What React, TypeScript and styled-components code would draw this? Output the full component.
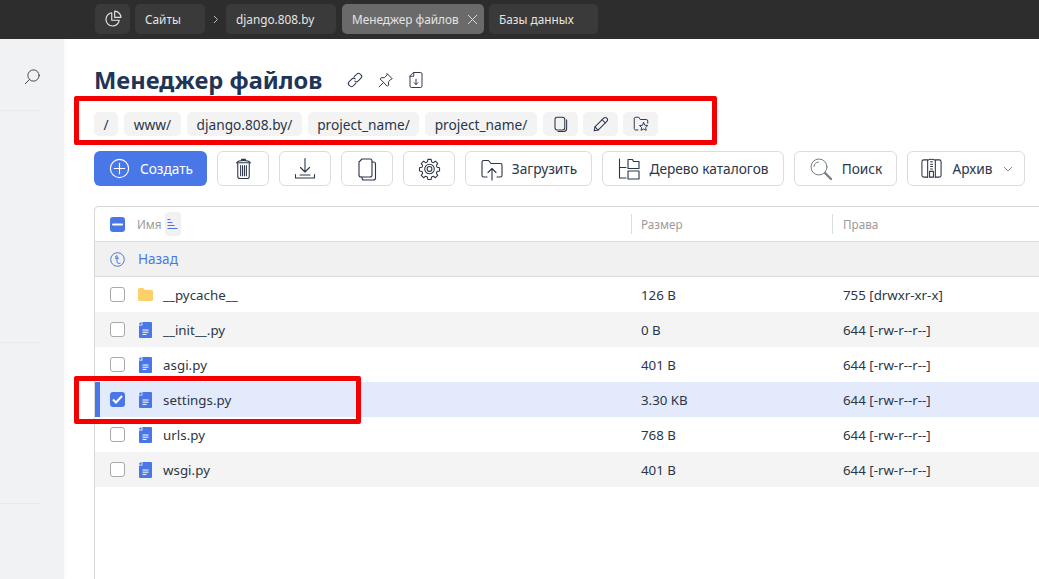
import React from "react";
import styled, { createGlobalStyle } from "styled-components";

const GlobalStyle = createGlobalStyle`
  html, body {
    margin: 0;
    padding: 0;
    height: 100%;
    overflow: hidden;
    background: #fff;
  }
  body {
    font-family: "Noto Sans", "Open Sans", sans-serif;
    color: #2b3648;
  }
  * { box-sizing: border-box; }
`;

const Page = styled.div`
  position: relative;
  width: 1039px;
  height: 579px;
  overflow: hidden;
  display: flex;
  flex-direction: column;
`;

const TopBar = styled.header`
  height: 39px;
  flex: none;
  background: #2d2d2d;
  display: flex;
  align-items: flex-start;
  padding: 4px 0 0 95px;
`;

const Tab = styled.div<{ $w: number; $active?: boolean; $gap?: number }>`
  width: ${(p) => p.$w}px;
  height: 30px;
  margin-right: ${(p) => p.$gap ?? 5}px;
  padding: 0 6px 0 10px;
  border-radius: 5px;
  background: ${(p) => (p.$active ? "#6a6a6a" : "#3a3a3a")};
  color: #e4e4e4;
  font-size: 11.8px;
  display: flex;
  align-items: center;
  justify-content: space-between;
  white-space: nowrap;
`;

const IconTab = styled(Tab)`
  padding: 0;
  justify-content: center;
`;

const TabArrow = styled.div`
  width: 21px;
  height: 30px;
  color: #bdbdbd;
  display: flex;
  align-items: center;
  justify-content: center;
`;

const Body = styled.div`
  flex: 1;
  display: flex;
  min-height: 0;
`;

const Sidebar = styled.aside`
  width: 64px;
  flex: none;
  background: #f1f2f3;
  display: flex;
  flex-direction: column;
  box-shadow: 1px 0 4px rgba(0, 0, 0, 0.03);
`;

const SideSearch = styled.div`
  height: 71px;
  padding: 29px 0 0 23px;
  color: #2b3648;
`;

const SideLine = styled.div<{ $h: number }>`
  height: ${(p) => p.$h}px;
  width: 40px;
  border-top: 1px solid #e9eaeb;
`;

const Main = styled.main`
  flex: 1;
  min-width: 0;
  padding: 28px 0 0 30px;
  display: flex;
  flex-direction: column;
`;

const TitleRow = styled.div`
  display: flex;
  align-items: center;
  height: 26px;
  margin-bottom: 19px;
`;

const Title = styled.h1`
  margin: 0 24px 0 0;
  font-size: 23.7px;
  font-weight: 700;
  line-height: 26px;
  color: #1f3557;
  white-space: nowrap;
`;

const TitleIcons = styled.div`
  display: flex;
  align-items: center;
  gap: 13px;
  color: #2b3648;
`;

const Crumbs = styled.nav`
  display: flex;
  gap: 6px;
  height: 24px;
  margin-bottom: 15px;
`;

const Crumb = styled.div<{ $w: number }>`
  width: ${(p) => p.$w}px;
  height: 24px;
  border-radius: 5px;
  background: #f3f3f4;
  color: #2b3648;
  font-size: 13.7px;
  display: flex;
  align-items: center;
  justify-content: center;
  white-space: nowrap;
`;

const CrumbIcon = styled(Crumb)`
  margin-right: -1px;
`;

const Toolbar = styled.div`
  display: flex;
  gap: 10px;
  height: 35px;
  margin-bottom: 20px;
`;

const ToolButton = styled.button<{ $w: number; $gap?: number }>`
  width: ${(p) => p.$w}px;
  height: 35px;
  padding: 0;
  flex: none;
  border: 1px solid #dcdcdc;
  border-radius: 6px;
  background: #fff;
  color: #2b3648;
  font-family: inherit;
  font-size: 13.7px;
  display: flex;
  align-items: center;
  justify-content: center;
  gap: ${(p) => p.$gap ?? 8}px;
  white-space: nowrap;
`;

const CreateButton = styled(ToolButton)`
  border: none;
  background: #4a77e8;
  color: #fff;
`;

const Table = styled.section`
  width: 1000px;
  flex: 1;
  border: 1px solid #d8d8d8;
  border-bottom: none;
  border-right: none;
  border-radius: 5px 0 0 0;
`;

const Row = styled.div<{ $stripe?: boolean; $selected?: boolean }>`
  position: relative;
  height: 35px;
  display: grid;
  grid-template-columns: 536px 201px 1fr;
  grid-template-rows: 100%;
  align-items: center;
  background: ${(p) =>
    p.$selected ? "#e3eafb" : p.$stripe ? "#f4f4f4" : "transparent"};
  box-shadow: ${(p) => (p.$selected ? "inset 5px 0 0 #4a77e8" : "none")};
  font-size: 13.3px;
  color: #2b3648;
`;

const HeadRow = styled(Row)`
  height: 35px;
  border-bottom: 1px solid #dcdcdc;
  font-size: 11.7px;
  color: #9a9a9a;
`;

const BackRow = styled.div`
  height: 35px;
  display: flex;
  align-items: center;
  gap: 13px;
  padding-left: 15px;
  background: #f1f1f1;
  border-bottom: 1px solid #dcdcdc;
  color: #4a77e8;
  font-size: 13.5px;
`;

const NameCell = styled.div`
  display: flex;
  align-items: center;
  padding-left: 15px;
`;

const FileName = styled.span`
  padding-top: 1px;
  line-height: 18px;
  letter-spacing: 0.04px;
`;

const HeadCell = styled.div<{ $pad?: number }>`
  height: 20px;
  padding-left: ${(p) => p.$pad ?? 9}px;
  border-left: 1px solid #dcdcdc;
  display: flex;
  align-items: center;
`;

const Cell = styled.div<{ $pad?: number }>`
  padding: 1px 0 0 ${(p) => p.$pad ?? 10}px;
  line-height: 18px;
  white-space: nowrap;
`;

const Check = styled.span<{ $on?: boolean }>`
  width: 15px;
  height: 15px;
  flex: none;
  border-radius: 3px;
  border: ${(p) => (p.$on ? "none" : "1px solid #a9a9a9")};
  background: ${(p) => (p.$on ? "#4a77e8" : "#fff")};
  display: flex;
  align-items: center;
  justify-content: center;
`;

const RowIcon = styled.span`
  width: 15px;
  margin-left: 13px;
  margin-right: 10px;
  flex: none;
  display: flex;
  justify-content: center;
`;

const HeadName = styled.span`
  margin-left: 12px;
`;

const SortBadge = styled.span`
  width: 16px;
  height: 24px;
  margin-left: 3px;
  border-radius: 4px;
  background: #f1f1f1;
  display: flex;
  align-items: center;
  justify-content: center;
`;

const Highlight = styled.div<{ $x: number; $y: number; $w: number; $h: number }>`
  position: absolute;
  left: ${(p) => p.$x}px;
  top: ${(p) => p.$y}px;
  width: ${(p) => p.$w}px;
  height: ${(p) => p.$h}px;
  border: 5px solid #f40000;
  border-radius: 2px;
  pointer-events: none;
`;

type IconProps = { size?: number; sw?: number; children: React.ReactNode };

const Ico = ({ size = 20, sw = 1.2, children }: IconProps) => (
  <svg
    width={size}
    height={size}
    viewBox="0 0 24 24"
    fill="none"
    stroke="currentColor"
    strokeWidth={sw}
    strokeLinecap="round"
    strokeLinejoin="round"
  >
    {children}
  </svg>
);

const PyFile = () => (
  <svg width="13" height="16" viewBox="0 0 13 16">
    <path d="M1 0.500h1.600v2.200H0.400V1.200z" fill="#4a77e8" />
    <path d="M3.400 0H12a1 1 0 0 1 1 1v14a1 1 0 0 1-1 1H1a1 1 0 0 1-1-1V3.400h3.400z" fill="#4a77e8" />
    <path d="M3.500 8h6M3.500 10.200h6M3.500 12.400h4" stroke="#fff" strokeWidth="1" />
  </svg>
);

const Folder = () => (
  <svg width="15" height="13" viewBox="0 0 15 13">
    <path d="M0 1.500A1.500 1.500 0 0 1 1.500 0h3.700l1.600 1.800h6.700A1.500 1.500 0 0 1 15 3.300v8.200a1.500 1.500 0 0 1-1.500 1.500h-12A1.500 1.500 0 0 1 0 11.500z" fill="#ffcf69" />
  </svg>
);

type FileRow = { name: string; size: string; rights: string; dir?: boolean; selected?: boolean };

const files: FileRow[] = [
  { name: "__pycache__", size: "126 B", rights: "755 [drwxr-xr-x]", dir: true },
  { name: "__init__.py", size: "0 B", rights: "644 [-rw-r--r--]" },
  { name: "asgi.py", size: "401 B", rights: "644 [-rw-r--r--]" },
  { name: "settings.py", size: "3.30 KB", rights: "644 [-rw-r--r--]", selected: true },
  { name: "urls.py", size: "768 B", rights: "644 [-rw-r--r--]" },
  { name: "wsgi.py", size: "401 B", rights: "644 [-rw-r--r--]" },
];

const crumbs = [
  { label: "/", w: 24 },
  { label: "www/", w: 57 },
  { label: "django.808.by/", w: 115 },
  { label: "project_name/", w: 111 },
  { label: "project_name/", w: 112 },
];

export default function App() {
  return (
    <Page>
      <GlobalStyle />
      <TopBar>
        <IconTab $w={35} $gap={5}>
          <Ico size={20} sw={1.4}>
            <path d="M10.500 4.500a8 8 0 1 0 9 9h-9z" />
            <path d="M14 2.500a8 8 0 0 1 7.500 7.500H14z" />
          </Ico>
        </IconTab>
        <Tab $w={70} $gap={0}>Сайты</Tab>
        <TabArrow>
          <svg width="7" height="9" viewBox="0 0 7 9" fill="none" stroke="currentColor">
            <path d="M2 1l3.500 3.500L2 8" />
          </svg>
        </TabArrow>
        <Tab $w={110} $gap={6}>django.808.by</Tab>
        <Tab $w={142} $active>
          Менеджер файлов
          <svg width="11" height="11" viewBox="0 0 11 11" stroke="#d8d8d8" fill="none">
            <path d="M1 1l9 9M10 1l-9 9" />
          </svg>
        </Tab>
        <Tab $w={109}>Базы данных</Tab>
      </TopBar>
      <Body>
        <Sidebar>
          <SideSearch>
            <Ico size={18}>
              <circle cx="14" cy="10" r="7.500" />
              <path d="M8.500 15.500 3 21" />
            </Ico>
          </SideSearch>
          <SideLine $h={232} />
          <SideLine $h={161} />
          <SideLine $h={10} />
        </Sidebar>
        <Main>
          <TitleRow>
            <Title>Менеджер файлов</Title>
            <TitleIcons>
              <Ico size={18} sw={1.4}>
                <path d="M11 7.500 14.500 4a3 3 0 0 1 4.200 0l1.300 1.300a3 3 0 0 1 0 4.200L16 13.500a3 3 0 0 1-4.200 0" />
                <path d="M13 16.500 9.500 20a3 3 0 0 1-4.200 0L4 18.700a3 3 0 0 1 0-4.200L8 10.500a3 3 0 0 1 4.200 0" />
              </Ico>
              <Ico size={17} sw={1.4}>
                <path d="M14.500 2.500 21.500 9.500 19.500 10.500 16 14l.5 4.500-2 1.500-10-10 1.500-2L10.500 8 14 4.500z" />
                <path d="M9 15 3 21" />
              </Ico>
              <Ico size={18} sw={1.3}>
                <path d="M9 2h9a2 2 0 0 1 2 2v16a2 2 0 0 1-2 2H6a2 2 0 0 1-2-2V7z" />
                <path d="M9 2v5H4" />
                <path d="M12 11v7M9.500 15.500 12 18l2.500-2.500" />
              </Ico>
            </TitleIcons>
          </TitleRow>
          <Crumbs>
            {crumbs.map((c, i) => (
              <Crumb key={i} $w={c.w}>{c.label}</Crumb>
            ))}
            <CrumbIcon $w={35}>
              <Ico size={18} sw={1.4}>
                <rect x="4" y="3" width="13" height="17" rx="3" />
                <path d="M19.500 6.500V18a4 4 0 0 1-4 4H8" />
              </Ico>
            </CrumbIcon>
            <CrumbIcon $w={35}>
              <Ico size={19} sw={1.3}>
                <path d="M4 20l1-5L16 4a2.500 2.500 0 0 1 4 4L9 19z" />
                <path d="M14 6l4 4M5 15l4 4" />
              </Ico>
            </CrumbIcon>
            <Crumb $w={35}>
              <Ico size={18} sw={1.3}>
                <path d="M8 20H5a2 2 0 0 1-2-2V5a2 2 0 0 1 2-2h4l2 3h8a2 2 0 0 1 2 2v3" />
                <path d="M15.500 10l1.700 3.600 3.800.5-2.800 2.600.7 3.800-3.400-1.900-3.400 1.900.7-3.800-2.800-2.600 3.800-.5z" />
              </Ico>
            </Crumb>
          </Crumbs>
          <Toolbar>
            <CreateButton $w={113} $gap={9}>
              <Ico size={23} sw={1.2}>
                <circle cx="12" cy="12" r="9.500" />
                <path d="M12 6.500v11M6.500 12h11" />
              </Ico>
              Создать
            </CreateButton>
            <ToolButton $w={52}>
              <Ico size={23} sw={1.1}>
                <path d="M5 6c2-3 12-3 14 0M10 3.600V2.500h4v1.100" />
                <path d="M5 6h14M6 6v14a2.500 2.500 0 0 0 2.500 2.500h7A2.500 2.500 0 0 0 18 20V6" />
                <path d="M9 9v10.500M11 9v10.500M13 9v10.500M15 9v10.500" />
              </Ico>
            </ToolButton>
            <ToolButton $w={52}>
              <Ico size={24} sw={1.1}>
                <path d="M12 1.500v13M7.500 10.500 12 15l4.500-4.500" />
                <path d="M2.500 17.500v3.500h19v-3.500M7 18h10" />
              </Ico>
            </ToolButton>
            <ToolButton $w={52}>
              <Ico size={24} sw={1.1}>
                <path d="M7 2h8a2 2 0 0 1 2 2v14a2 2 0 0 1-2 2H6a2 2 0 0 1-2-2V5z" />
                <path d="M17 5h1.500a2 2 0 0 1 2 2v14a2 2 0 0 1-2 2H9a2 2 0 0 1-2-2v-1" />
              </Ico>
            </ToolButton>
            <ToolButton $w={52}>
              <Ico size={23} sw={1.1}>
                <path d="M10.300 2.500h3.400l.5 2.600 1.800.8 2.200-1.500 2.400 2.400-1.500 2.200.8 1.800 2.600.5v3.400l-2.600.5-.8 1.800 1.500 2.200-2.400 2.400-2.200-1.500-1.800.8-.5 2.600h-3.400l-.5-2.600-1.800-.8-2.200 1.500-2.400-2.400 1.500-2.200-.8-1.800-2.600-.5v-3.400l2.600-.5.8-1.800-1.500-2.200 2.400-2.400 2.200 1.500 1.800-.8z" />
                <circle cx="12" cy="12.500" r="5" />
                <circle cx="12" cy="12.500" r="2.500" />
              </Ico>
            </ToolButton>
            <ToolButton $w={127}>
              <Ico size={24} sw={1.1}>
                <path d="M7 20H3.500a1.500 1.500 0 0 1-1.500-1.500V5a1.500 1.500 0 0 1 1.500-1.500h5l2.500 3h9.500A1.500 1.500 0 0 1 22 8v10.500a1.500 1.500 0 0 1-1.500 1.500H17" />
                <path d="M12 23V11.500M8 15.500l4-4 4 4" />
              </Ico>
              Загрузить
            </ToolButton>
            <ToolButton $w={182}>
              <Ico size={24} sw={1.1}>
                <path d="M2.500 2v19H9M2.500 10.500H9" />
                <path d="M11 2.500h4.500l1 2H22v7H11zM11 14h11v8H11z" />
              </Ico>
              Дерево каталогов
            </ToolButton>
            <ToolButton $w={103} $gap={9}>
              <Ico size={24} sw={1}>
                <g stroke="#777e88">
                  <circle cx="10" cy="10" r="8" />
                  <path d="M5 9.500A5 5 0 0 1 9.500 5" />
                  <path d="M16 16l6 6" strokeWidth={2.400} />
                </g>
              </Ico>
              Поиск
            </ToolButton>
            <ToolButton $w={118} $gap={10}>
              <Ico size={23} sw={1.1}>
                <path d="M8 21H4a2 2 0 0 1-2-2V5a2 2 0 0 1 2-2h4M16 3h4a2 2 0 0 1 2 2v14a2 2 0 0 1-2 2h-4" />
                <path d="M8 21V3.500c2-1.500 6-1.500 8 0V21" />
                <path d="M11 5h2M11 7.500h2M11 10h2M11 12.500h2M10 15h4v6h-4z" />
              </Ico>
              Архив
              <svg width="10" height="6" viewBox="0 0 10 6" fill="none" stroke="#8c8c8c">
                <path d="M1 1l4 4 4-4" />
              </svg>
            </ToolButton>
          </Toolbar>
          <Table>
            <HeadRow>
              <NameCell>
                <Check $on>
                  <svg width="11" height="3" viewBox="0 0 11 3">
                    <rect width="11" height="2" y="0.500" rx="1" fill="#fff" />
                  </svg>
                </Check>
                <HeadName>Имя</HeadName>
                <SortBadge>
                  <svg width="11" height="10" viewBox="0 0 11 10" stroke="#4a77e8" fill="none">
                    <path d="M0.500 0.500h3M0.500 3.500h5M0.500 6.500h7M0.500 9.500h10" />
                  </svg>
                </SortBadge>
              </NameCell>
              <HeadCell>Размер</HeadCell>
              <HeadCell $pad={10}>Права</HeadCell>
            </HeadRow>
            <BackRow>
              <svg width="15" height="15" viewBox="0 0 15 15" fill="none" stroke="#4a77e8">
                <circle cx="7.500" cy="7.500" r="6.800" />
                <path d="M5 5.200 7 3.500V9.500Q7 11.500 9 11.500Q10 11.500 10.500 11M5 6.200h4" />
              </svg>
              Назад
            </BackRow>
            {files.map((f, i) => (
              <Row key={f.name} $stripe={i % 2 === 1} $selected={f.selected}>
                <NameCell>
                  <Check $on={f.selected}>
                    {f.selected && (
                      <svg width="11" height="9" viewBox="0 0 11 9" fill="none" stroke="#fff" strokeWidth="2">
                        <path d="M1 4.500 4 7.500 10 1" />
                      </svg>
                    )}
                  </Check>
                  <RowIcon>{f.dir ? <Folder /> : <PyFile />}</RowIcon>
                  <FileName>{f.name}</FileName>
                </NameCell>
                <Cell>{f.size}</Cell>
                <Cell $pad={11}>{f.rights}</Cell>
              </Row>
            ))}
          </Table>
        </Main>
      </Body>
      <Highlight $x={74} $y={96} $w={643} $h={49} />
      <Highlight $x={74} $y={376} $w={287} $h={48} />
    </Page>
  );
}
